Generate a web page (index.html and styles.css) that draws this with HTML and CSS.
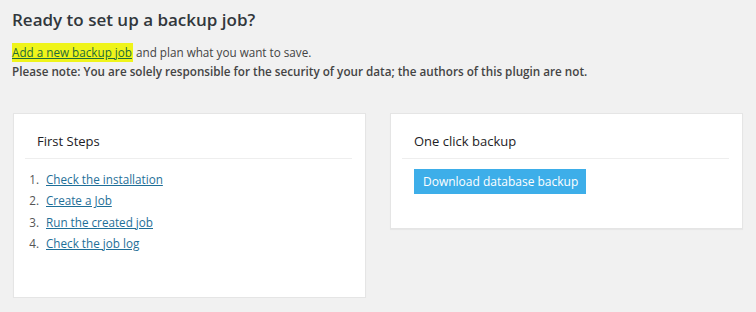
FILE: index.html
```html
<!DOCTYPE html>
<html lang="en">

<head>
    <meta charset="UTF-8">
    <meta name="viewport" content="width=device-width, initial-scale=1.0">
    <title>BackWPup Dashboard</title>
    <link rel="stylesheet" href="styles.css">
</head>

<body>
    <div class="wrap">
        <h2 class="welcome-title">Ready to set up a backup job?</h2>
        <p class="intro">
            <a href="#" class="highlight">Add a new backup job</a> and plan what you want to save.<br>
            <strong>Please note: You are solely responsible for the security of your data; the authors of this plugin are not.</strong>
        </p>

        <div class="boxes">
            <div class="postbox first-steps">
                <h3>First Steps</h3>
                <ol class="steps">
                    <li><a href="#">Check the installation</a></li>
                    <li><a href="#">Create a Job</a></li>
                    <li><a href="#">Run the created job</a></li>
                    <li><a href="#">Check the job log</a></li>
                </ol>
            </div>
            <div class="postbox one-click">
                <h3>One click backup</h3>
                <button class="button-primary">Download database backup</button>
            </div>
        </div>
    </div>
</body>

</html>
```

FILE: styles.css
```css
body {
    font-family: 'Open Sans', 'Liberation Sans', sans-serif;
    background-color: #f1f1f1;
    color: #444;
    font-size: 11.7px;
    margin: 0;
    padding: 0;
}

a {
    color: #1f6f98;
}

.wrap {
    padding: 9px 13px 0 12px;
}

.welcome-title {
    font-size: 17px;
    font-weight: 600;
    color: #32373c;
    margin: 0;
    line-height: 22px;
}

.intro {
    margin: 12px 0 0;
    line-height: 19px;
}

.intro strong {
    font-weight: 600;
}

.highlight {
    background-color: #eff41a;
    color: #1f6b3a;
    padding: 1px 1px 2px 0;
}

.boxes {
    display: flex;
    align-items: flex-start;
    gap: 24px;
    margin-top: 32px;
    padding-left: 1px;
}

.postbox {
    width: 354px;
    box-sizing: border-box;
    background: #fff;
    border: 1px solid #e5e5e5;
    box-shadow: 0 1px 1px rgba(0, 0, 0, 0.04);
    padding: 11px 13px 0 11px;
}

.postbox h3 {
    font-size: 13px;
    font-weight: 400;
    color: #1d2125;
    margin: 0;
    padding: 8px 12px;
    line-height: 17px;
    border-bottom: 1px solid #eee;
}

.first-steps {
    height: 185px;
}

.steps {
    margin: 10px 0 0;
    padding-left: 17px;
}

.steps li {
    line-height: 21.3px;
    color: #555;
    padding-left: 4px;
}

.one-click {
    height: 116px;
}

.button-primary {
    font-family: inherit;
    font-size: 12px;
    color: #fff;
    background-color: #3daee9;
    border: none;
    border-radius: 0;
    height: 25px;
    padding: 0 8px 0 9px;
    margin: 10px 0 0 12px;
    cursor: pointer;
}
```
